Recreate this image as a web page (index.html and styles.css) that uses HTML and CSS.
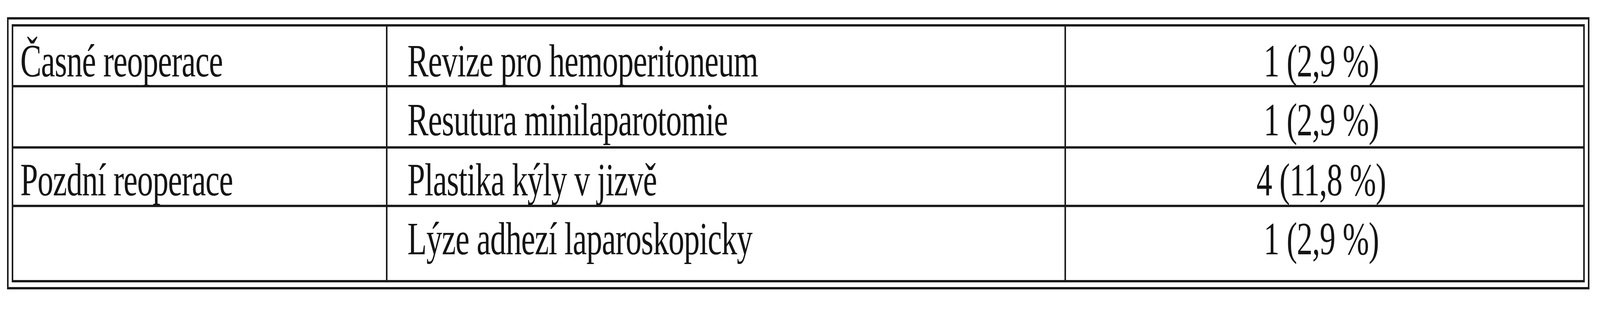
FILE: index.html
```html
<!DOCTYPE html>
<html lang="cs">
<head>
<meta charset="utf-8">
<title>Reoperace</title>
<link rel="stylesheet" href="styles.css">
</head>
<body>
<div class="frame">
  <div class="grid">
    <div class="cell c1 r1"><span class="t">Časné reoperace</span></div>
    <div class="cell c2 r1"><span class="t">Revize pro hemoperitoneum</span></div>
    <div class="cell c3 r1"><span class="t">1 (2,9 %)</span></div>

    <div class="cell c1 r2"></div>
    <div class="cell c2 r2"><span class="t">Resutura minilaparotomie</span></div>
    <div class="cell c3 r2"><span class="t">1 (2,9 %)</span></div>

    <div class="cell c1 r3"><span class="t">Pozdní reoperace</span></div>
    <div class="cell c2 r3"><span class="t">Plastika kýly v jizvě</span></div>
    <div class="cell c3 r3"><span class="t">4 (11,8 %)</span></div>

    <div class="cell c1 r4"></div>
    <div class="cell c2 r4"><span class="t">Lýze adhezí laparoskopicky</span></div>
    <div class="cell c3 r4"><span class="t">1 (2,9 %)</span></div>
  </div>
</div>
<script src="script.js"></script>
</body>
</html>
```

FILE: styles.css
```css
:root {
  /* one reference pixel, horizontally, relative to the 6013px-wide reference */
  --u: calc(100vw / 6013);
  /* horizontal text scale (set precisely by script.js) */
  --sx: 0.6812;
}

html, body {
  margin: 0;
  padding: 0;
  background: #ffffff;
  overflow: hidden;
}

body {
  font-family: "Liberation Serif", "Times New Roman", serif;
  color: #141414;
}

.frame {
  display: inline-block;
  margin: 44px 0 0 calc(26 * var(--u));
  border-style: solid;
  border-color: #1c1c1c;
  border-width: 6px calc(6 * var(--u));
  padding: 12px calc(12 * var(--u));
}

.grid {
  display: grid;
  grid-template-columns: calc(1406 * var(--u)) calc(2550 * var(--u)) calc(1944 * var(--u));
  grid-template-rows: 156px 157px 150px 187px;
  border-style: solid;
  border-color: #1c1c1c;
  border-width: 6px calc(6 * var(--u));
}

.cell {
  box-sizing: border-box;
  font-size: 119px;
  line-height: 137px;
  letter-spacing: -1.5px;
  white-space: nowrap;
  border-bottom: 6px solid #1c1c1c;
}

.t {
  display: inline-block;
  transform: scaleX(var(--sx));
  transform-origin: left center;
}

.c1, .c2 {
  border-right: calc(6 * var(--u)) solid #1c1c1c;
}

.c1 { padding-left: calc(27 * var(--u)); }
.c2 { padding-left: calc(75 * var(--u)); }
.c3 {
  text-align: center;
  padding-right: calc(26 * var(--u));
}
.c3 .t { transform-origin: center center; }

.r1 { padding-top: 20px; }
.r2 { padding-top: 15px; }
.r3 { padding-top: 12px; }
.r4 { padding-top: 13px; border-bottom: none; }
```

FILE: script.js
```js
document.documentElement.style.setProperty('--sx', String(window.innerWidth / 6013));
```
